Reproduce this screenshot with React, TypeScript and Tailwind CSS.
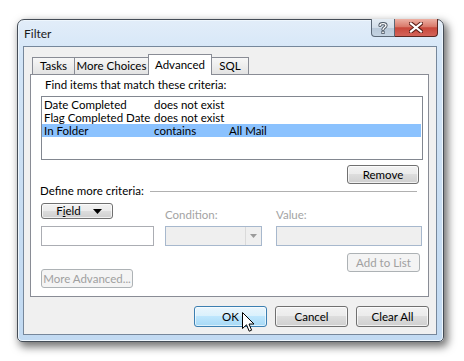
import React from "react";

const btn =
  "flex items-center justify-center rounded-[3px] border border-[#707070] bg-[linear-gradient(#f2f2f2_0%,#ebebeb_50%,#dddddd_50%,#cfcfcf_100%)] shadow-[inset_0_0_0_1px_rgba(255,255,255,0.7)] text-black";
const btnDisabled =
  "flex items-center justify-center rounded-[3px] border border-[#adb2b5] bg-[#f4f4f4] text-[#a0a0a0]";

export default function App() {
  return (
    <div className="relative w-[464px] h-[361px] overflow-hidden whitespace-nowrap bg-white font-['Lato',sans-serif] text-[11.5px] leading-[14px] text-black">
      <div className="pl-[17px] pt-[19px]">
        {/* window */}
        <div className="flex flex-col w-[427px] h-[323px] rounded-t-[7px] rounded-b-[5px] border border-[#454d57] bg-[linear-gradient(180deg,#e2edf9_0%,#d3e5f7_12%,#c8ddf2_60%,#c2daf2_100%)] shadow-[inset_0_0_0_1px_#eef6fd,3px_4px_9px_1px_rgba(0,0,0,0.55)]">
          {/* title bar */}
          <div className="flex h-[26px] items-start">
            <div className="pl-[6px] pt-[7px] text-[12px] text-[#1b1b1b] leading-[14px]">Filter</div>
            <div className="ml-auto mr-[5px] -mt-px flex h-[18px]">
              <div className="flex w-[24px] items-center justify-center rounded-bl-[4px] border border-t-0 border-[#5b6876] bg-[linear-gradient(#e4ecf3_0%,#d3dee9_50%,#b8c8d8_52%,#c5d4e2_100%)]">
                <svg width="10" height="12" viewBox="0 0 10 12">
                  <path d="M2 3.5 C2 1 8 1 8 3.5 C8 5.5 5 5.5 5 7.5" fill="none" stroke="#4a5562" strokeWidth="3.2" strokeLinecap="round" />
                  <path d="M2 3.5 C2 1 8 1 8 3.5 C8 5.5 5 5.5 5 7.5" fill="none" stroke="#fff" strokeWidth="1.4" strokeLinecap="round" />
                  <rect x="3.4" y="9" width="3.2" height="3" fill="#4a5562" />
                  <rect x="4.2" y="9.6" width="1.6" height="1.6" fill="#fff" />
                </svg>
              </div>
              <div className="flex w-[43px] items-center justify-center rounded-br-[4px] border border-t-0 border-l-0 border-[#5a2620] bg-[linear-gradient(#ecb0a4_0%,#d97a6b_45%,#c8473a_52%,#d3645a_100%)]">
                <svg width="14" height="11" viewBox="0 0 14 11">
                  <path d="M2 1.5 L12 9.5 M12 1.5 L2 9.5" stroke="#5a1d16" strokeWidth="4.2" strokeLinecap="square" />
                  <path d="M2 1.5 L12 9.5 M12 1.5 L2 9.5" stroke="#fff" strokeWidth="2.2" strokeLinecap="square" />
                </svg>
              </div>
            </div>
          </div>

          {/* client */}
          <div className="mx-[5px] flex h-[289px] w-[414px] flex-col border border-[#76879b] bg-[#f0f0f0]">
            {/* tabs */}
            <div className="flex h-[27px] items-end pl-[8px]">
              <div className="flex h-[17px] w-[43px] items-center justify-center border border-b-0 border-[#898c95] bg-[linear-gradient(#f7f7f7,#e3e3e3)]">Tasks</div>
              <div className="-ml-px flex h-[17px] w-[75px] items-center justify-center border border-b-0 border-[#898c95] bg-[linear-gradient(#f7f7f7,#e3e3e3)]">More Choices</div>
              <div className="relative z-10 -ml-px -mb-px flex h-[21px] w-[64px] items-start justify-center border border-b-0 border-[#898c95] bg-white pt-[3px]">Advanced</div>
              <div className="-ml-px flex h-[17px] w-[38px] items-center justify-center border border-b-0 border-[#898c95] bg-[linear-gradient(#f7f7f7,#e3e3e3)]">SQL</div>
            </div>

            {/* panel */}
            <div className="ml-[6px] flex h-[223px] w-[399px] flex-col border border-[#898c95] bg-white">
              <div className="ml-[14px] mt-[2px] h-[16px] leading-[16px]">Find items that match these criteria:</div>
              <div className="ml-[10px] mt-[3px] h-[64px] w-[382px] border border-[#828790] bg-white pt-px">
                <div className="flex h-[13px] items-center pl-[2px] leading-[13px]">
                  <span className="w-[110px] shrink-0">Date Completed</span>
                  <span>does not exist</span>
                </div>
                <div className="flex h-[13px] items-center pl-[2px] leading-[13px]">
                  <span className="w-[110px] shrink-0">Flag Completed Date</span>
                  <span>does not exist</span>
                </div>
                <div className="mr-px flex h-[13px] items-center bg-[#8bc2fe] pl-[2px] leading-[13px]">
                  <span className="w-[110px] shrink-0">In Folder</span>
                  <span className="w-[75px] shrink-0">contains</span>
                  <span>All Mail</span>
                </div>
              </div>
              <div className="mt-[5px] flex justify-end pr-[9px]">
                <div className={`${btn} h-[19px] w-[72px]`}>Remove</div>
              </div>
              <div className="mt-0 ml-[9px] mr-[11px] flex h-[14px] items-center gap-[6px]">
                <span>Define more criteria:</span>
                <div className="h-px flex-1 bg-[#b0b0b0]" />
              </div>
              <div className="ml-[10px] mt-[5px] flex h-[43px] items-end">
                <div className="flex w-[113px] flex-col gap-[7px]">
                  <div className={`${btn} h-[16px] w-[72px] gap-[12px] pl-[4px]`}>
                    <span>
                      F<span className="underline underline-offset-1">i</span>eld
                    </span>
                    <svg width="9" height="5" viewBox="0 0 9 5">
                      <path d="M0 0 H9 L4.5 5 Z" fill="#000" />
                    </svg>
                  </div>
                  <div className="h-[20px] w-[113px] border border-[#abadb3] bg-white" />
                </div>
                <div className="ml-[11px] flex w-[97px] flex-col gap-[4px]">
                  <div className="h-[14px] text-[#a3a3a3]">Condition:</div>
                  <div className="flex h-[20px] w-[97px] border border-[#a7b8cd] bg-[#efefef]">
                    <div className="flex-1" />
                    <div className="flex w-[16px] items-center justify-center border-l border-[#dadada]">
                      <svg width="7" height="4" viewBox="0 0 7 4">
                        <path d="M0 0 H7 L3.5 4 Z" fill="#9a9a9a" />
                      </svg>
                    </div>
                  </div>
                </div>
                <div className="ml-[14px] flex w-[146px] flex-col gap-[4px]">
                  <div className="h-[14px] text-[#a3a3a3]">Value:</div>
                  <div className="h-[20px] w-[146px] border border-[#a7b8cd] bg-[#efefef]" />
                </div>
              </div>
              <div className="mt-[7px] flex justify-end pr-[8px]">
                <div className={`${btnDisabled} h-[19px] w-[73px]`}>Add to List</div>
              </div>
              <div className="-mt-[3px] ml-[10px]">
                <div className={`${btnDisabled} h-[19px] w-[92px]`}>More Advanced...</div>
              </div>
            </div>

            {/* bottom buttons */}
            <div className="mt-[9px] flex justify-end gap-[8px] pr-[7px]">
              <div className="flex h-[21px] w-[73px] items-center justify-center rounded-[3px] border border-[#3c7fb1] bg-[linear-gradient(#eaf6fd_0%,#d9f0fc_50%,#bee6fd_50%,#a7d9f5_100%)] shadow-[inset_0_0_0_1px_rgba(255,255,255,0.6)]">OK</div>
              <div className={`${btn} h-[21px] w-[73px]`}>Cancel</div>
              <div className={`${btn} h-[21px] w-[73px]`}>Clear All</div>
            </div>
          </div>
        </div>
      </div>

      {/* mouse cursor */}
      <svg className="absolute left-[242px] top-[312px]" width="13" height="21" viewBox="0 0 13 21">
        <path d="M0.5 0.5 L0.5 16.5 L4.5 12.8 L7.2 19.2 L9.6 18.2 L7 12 L12 12 Z" fill="#fff" stroke="#000" strokeWidth="1" strokeLinejoin="round" />
      </svg>
    </div>
  );
}
